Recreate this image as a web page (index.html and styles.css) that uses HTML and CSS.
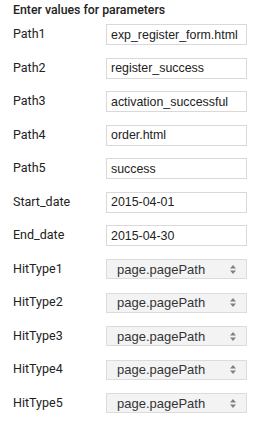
FILE: index.html
```html
<html>
<head>
	<meta charset="utf-8">
	<title>Parameters</title>
	<link rel="stylesheet" href="styles.css">
</head>
<body>
	<section class="params">
		<h3 class="params-title">Enter values for parameters</h3>
		<div class="row"><label>Path1</label><input class="field" value="exp_register_form.html"></div>
		<div class="row"><label>Path2</label><input class="field" value="register_success"></div>
		<div class="row"><label>Path3</label><input class="field" value="activation_successful"></div>
		<div class="row"><label>Path4</label><input class="field" value="order.html"></div>
		<div class="row"><label>Path5</label><input class="field" value="success"></div>
		<div class="row"><label>Start_date</label><input class="field" value="2015-04-01"></div>
		<div class="row"><label>End_date</label><input class="field" value="2015-04-30"></div>
		<div class="row"><label>HitType1</label><div class="pick"><span>page.pagePath</span><svg width="6" height="9" viewBox="0 0 6 9"><path d="M3 0 L6 3.5 L0 3.5 Z M0 5.5 L6 5.5 L3 9 Z" fill="#808080"/></svg></div></div>
		<div class="row"><label>HitType2</label><div class="pick"><span>page.pagePath</span><svg width="6" height="9" viewBox="0 0 6 9"><path d="M3 0 L6 3.5 L0 3.5 Z M0 5.5 L6 5.5 L3 9 Z" fill="#808080"/></svg></div></div>
		<div class="row"><label>HitType3</label><div class="pick"><span>page.pagePath</span><svg width="6" height="9" viewBox="0 0 6 9"><path d="M3 0 L6 3.5 L0 3.5 Z M0 5.5 L6 5.5 L3 9 Z" fill="#808080"/></svg></div></div>
		<div class="row"><label>HitType4</label><div class="pick"><span>page.pagePath</span><svg width="6" height="9" viewBox="0 0 6 9"><path d="M3 0 L6 3.5 L0 3.5 Z M0 5.5 L6 5.5 L3 9 Z" fill="#808080"/></svg></div></div>
		<div class="row"><label>HitType5</label><div class="pick"><span>page.pagePath</span><svg width="6" height="9" viewBox="0 0 6 9"><path d="M3 0 L6 3.5 L0 3.5 Z M0 5.5 L6 5.5 L3 9 Z" fill="#808080"/></svg></div></div>
	</section>
</body>
</html>
```
FILE: styles.css
```css
body {
	margin: 0;
	background-color: #fff;
	color: #222;
}
.params {
	padding: 2px 0 0 13px;
}
.params-title {
	margin: 0;
	font-family: Roboto, sans-serif;
	font-weight: 500;
	font-size: 12.3px;
	line-height: 16px;
	color: #222;
}
.row {
	display: grid;
	grid-template-columns: 93px 141px;
	align-items: center;
	height: 33.5px;
}
.row label {
	font-family: Roboto, sans-serif;
	font-size: 12.5px;
	color: #222;
	margin-top: -2px;
}
.field {
	box-sizing: border-box;
	width: 141px;
	height: 21px;
	margin: 0;
	padding: 0 4px;
	border: 1px solid #d9d9d9;
	font-family: "Liberation Sans", Arial, sans-serif;
	font-size: 12.4px;
	color: #222;
	outline: none;
}
.pick {
	box-sizing: border-box;
	display: flex;
	align-items: center;
	justify-content: space-between;
	width: 141px;
	height: 20px;
	padding: 0 10px 0 10px;
	border: 1px solid #dcdcdc;
	background-color: #f3f3f3;
	font-family: "Liberation Sans", Arial, sans-serif;
	font-size: 13px;
	color: #333;
}
.pick svg {
	display: block;
}
```
